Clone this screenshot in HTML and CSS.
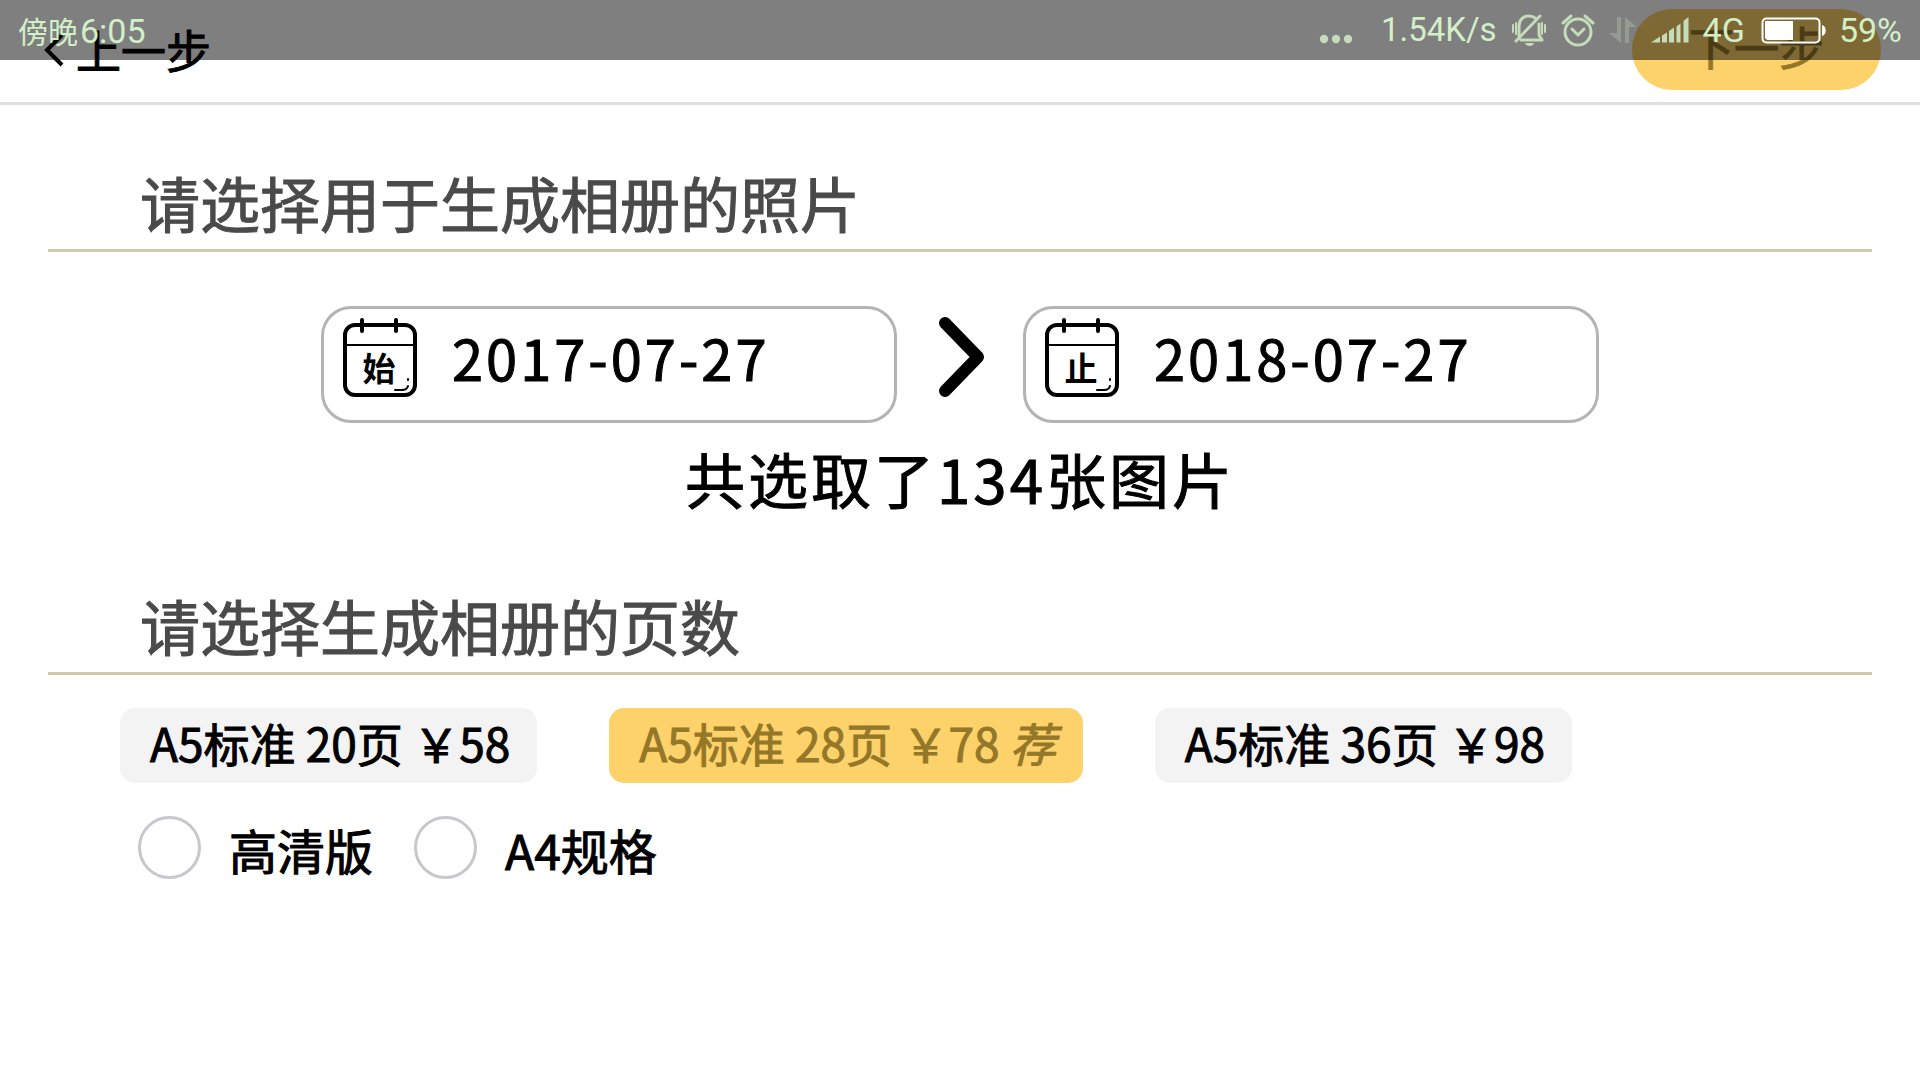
FILE: index.html
```html
<!DOCTYPE html>
<html lang="zh-CN">
  <head>
    <meta charset="utf-8" />
    <meta name="viewport" content="width=device-width, initial-scale=1" />
    <title>生成相册</title>
    <link rel="stylesheet" href="styles.css">
  </head>

  <body>
    <!-- System status bar, lies over the page header -->
    <div class="status-bar">
      <div class="clock"><span class="daypart">傍晚</span>6:05</div>
      <svg class="icon-dots" width="34" height="10" viewBox="0 0 34 10">
        <circle cx="5" cy="5" r="4.2" /><circle cx="17" cy="5" r="4.2" /><circle cx="29" cy="5" r="4.2" />
      </svg>
      <span class="speed">1.54K/s</span>
      <svg class="icon-bell" width="36" height="34" viewBox="0 0 36 34">
        <path d="M8 23V13C8 7 12 3 18 3c3 0 5 1 7 2.500M28 11v11l3 5H10M5 28L29 3" />
        <path class="thin" d="M2 12v7M5 10v11M31 10v11M34 12v7" />
        <path class="solid" d="M14 30h9c-1 4-8 4-9 0z" />
      </svg>
      <svg class="icon-alarm" width="34" height="34" viewBox="0 0 34 34">
        <circle cx="17" cy="19" r="13" />
        <path d="M11 16l6 6 6-6" />
        <path d="M2 10l8-7M32 10l-8-7" />
      </svg>
      <svg class="icon-data" width="28" height="28" viewBox="0 0 28 28">
        <path d="M8 1h4v26L0 17h8zM16 27h4V11h8L16 1z" />
      </svg>
      <svg class="icon-signal" width="38" height="26" viewBox="0 0 38 26">
        <path d="M0 25.500L9 19.500V25.500zM11 18.500l5-3V25.500h-5zM18 14l5-3.500V25.500h-5zM25.500 9.500l4-3V25.500h-4zM32.500 4l5-4V25.500h-5z" />
      </svg>
      <span class="network">4G</span>
      <svg class="icon-battery" width="66" height="27" viewBox="0 0 66 27">
        <rect x="1.500" y="1.500" width="57" height="24" rx="4" />
        <path d="M4 4h28v19H6l-2-2zM61 8c5 1 5 10 0 11z" />
      </svg>
      <span class="charge">59%</span>
    </div>

    <header class="top-bar">
      <button type="button" class="back">
        <svg width="22" height="34" viewBox="0 0 22 34"><path d="M20 2L5 17l15 15" /></svg>
        上一步
      </button>
      <button type="button" class="next"><span>下一步</span></button>
    </header>

    <main>
      <section>
        <h2 class="title">请选择用于生成相册的照片</h2>
        <div class="date-range">
          <label class="date-field">
            <svg class="calendar" width="76" height="84" viewBox="0 0 76 84">
              <rect x="2" y="9" width="70" height="70" rx="10" />
              <path class="thin" d="M2 29h70M52 74h7q5 0 6-4M65 63v1" />
              <path class="ring" d="M19 4v11M53 4v11" />
              <text x="36" y="65">始</text>
            </svg>
            <input type="text" name="start" value="2017-07-27" readonly>
          </label>
          <svg class="arrow" width="48" height="98" viewBox="0 0 48 98"><path d="M9 7l33 34L9 75" /></svg>
          <label class="date-field">
            <svg class="calendar" width="76" height="84" viewBox="0 0 76 84">
              <rect x="2" y="9" width="70" height="70" rx="10" />
              <path class="thin" d="M2 29h70M52 74h7q5 0 6-4M65 63v1" />
              <path class="ring" d="M19 4v11M53 4v11" />
              <text x="36" y="65">止</text>
            </svg>
            <input type="text" name="end" value="2018-07-27" readonly>
          </label>
        </div>
        <p class="count">共选取了134张图片</p>
      </section>

      <section>
        <h2 class="title">请选择生成相册的页数</h2>
        <div class="plans">
          <button type="button" class="plan">A5标准 20页 ￥58</button>
          <button type="button" class="plan selected">A5标准 28页 ￥78 <i>荐</i></button>
          <button type="button" class="plan">A5标准 36页 ￥98</button>
        </div>
        <div class="options">
          <label class="option"><input type="checkbox" name="hd"><span>高清版</span></label>
          <label class="option"><input type="checkbox" name="a4"><span>A4规格</span></label>
        </div>
      </section>
    </main>
  </body>
</html>
```
FILE: styles.css
```css
* {
  box-sizing: border-box;
}

body {
  margin: 0;
  background-color: #fff;
  color: #000;
  font-family: "Noto Sans CJK SC", sans-serif;
  font-weight: 400;
}

button,
input {
  margin: 0;
  padding: 0;
  border: 0;
  background: none;
  color: inherit;
  font: inherit;
}

button {
  cursor: pointer;
}

/* Slightly heavier strokes than the regular weight */
main,
header {
  -webkit-text-stroke: 1px;
}

svg {
  flex: none;
  fill: none;
  stroke: #000;
  stroke-linecap: round;
  stroke-linejoin: round;
}

/* Status bar */
.status-bar {
  position: absolute;
  top: 0;
  left: 0;
  right: 0;
  z-index: 10;
  display: flex;
  align-items: center;
  height: 60px;
  padding: 0 18px;
  background-color: rgba(0, 0, 0, 0.5);
  color: #d3efc7;
  font-family: Roboto, "Noto Sans CJK SC", sans-serif;
  font-size: 34px;
  line-height: 62px;
}

.status-bar svg {
  fill: #c5dcba;
  stroke: none;
}

.clock {
  margin-right: auto;
  padding-top: 3px;
}

.daypart {
  margin-right: 2px;
  font-size: 30px;
}

.speed {
  font-size: 33px;
}

.status-bar .icon-dots {
  margin: 18px 28px 0 0;
}

.status-bar .icon-bell,
.status-bar .icon-alarm {
  margin-left: 14px;
  fill: none;
  stroke: #c5dcba;
  stroke-width: 3;
}

.icon-bell .thin {
  stroke-width: 2;
}

.icon-bell .solid {
  fill: #c5dcba;
  stroke: none;
}

.status-bar .icon-data {
  margin: 0 14px;
  opacity: 0.3;
}

.network {
  margin: 0 16px 0 14px;
}

.status-bar .icon-battery {
  margin-right: 12px;
  fill: #fff;
}

.icon-battery rect {
  fill: none;
  stroke: #fff;
  stroke-width: 2;
}

/* Header */
.top-bar {
  display: flex;
  align-items: center;
  justify-content: space-between;
  height: 105px;
  padding: 0 39px 3px 42px;
  border-bottom: 3px solid #e0e0e0;
  font-size: 45px;
  line-height: 60px;
}

.back {
  display: flex;
  align-items: center;
  gap: 12px;
}

.back svg {
  stroke-width: 4;
  stroke-linecap: butt;
  stroke-linejoin: miter;
}

.next {
  width: 249px;
  height: 81px;
  padding-bottom: 6px;
  border-radius: 40px;
  background-color: #fdd26a;
}

.next span,
.plan.selected {
  color: #947728;
}

/* Sections */
.title {
  margin: 0 48px;
  padding: 57px 92px 7px;
  border-bottom: 3px solid #d3c8ac;
  color: #4a4a4a;
  font-size: 60px;
  font-weight: 400;
  line-height: 80px;
}

.date-range {
  display: flex;
  align-items: center;
  justify-content: center;
  gap: 39px;
  margin-top: 54px;
}

.date-field {
  display: flex;
  align-items: flex-start;
  gap: 33px;
  width: 576px;
  height: 117px;
  padding: 7px 19px;
  border: 3px solid #b4b4b4;
  border-radius: 30px;
}

.date-field input {
  flex: 1;
  min-width: 0;
  height: 81px;
  font-size: 56px;
  letter-spacing: 3px;
}

.calendar rect,
.calendar .ring {
  stroke-width: 4;
}

.calendar .thin {
  stroke-width: 2;
}

.calendar text {
  fill: #000;
  stroke: none;
  font-size: 33px;
  font-weight: 700;
  text-anchor: middle;
}

.arrow {
  stroke-width: 12;
}

.count {
  margin: 15px 0 10px;
  font-size: 60px;
  line-height: 80px;
  letter-spacing: 3px;
  text-align: center;
}

.plans {
  display: flex;
  flex-wrap: wrap;
  gap: 72px;
  margin: 33px 120px 0;
}

.plan {
  height: 75px;
  padding: 0 27px 6px 30px;
  border-radius: 15px;
  background-color: #f3f3f3;
  font-size: 46px;
  line-height: 69px;
}

.plan.selected {
  background-color: #fdd26a;
}

.options {
  display: flex;
  gap: 41px;
  margin: 33px 138px;
  font-size: 48px;
  line-height: 66px;
}

.option {
  display: flex;
  align-items: flex-start;
  gap: 28px;
}

.option input {
  appearance: none;
  width: 63px;
  height: 63px;
  border: 3px solid #c7c7cc;
  border-radius: 50%;
  background-color: #fff;
}

.option input:checked {
  border-color: #fdd26a;
  background-color: #fdd26a;
}
```
